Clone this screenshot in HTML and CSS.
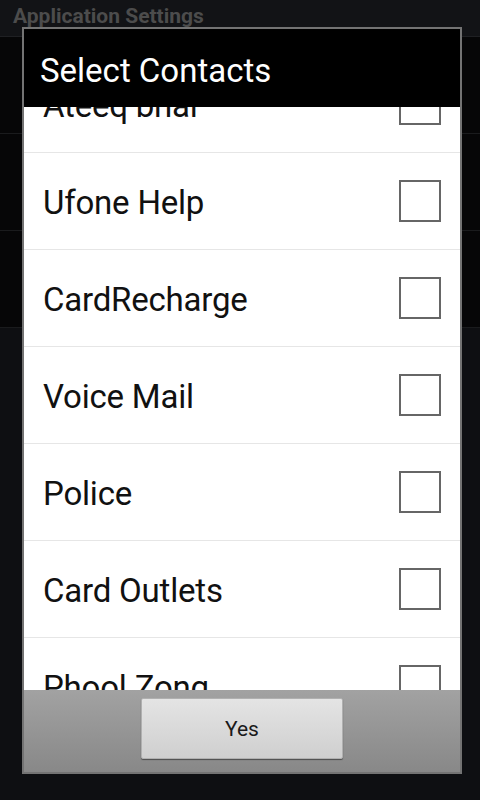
FILE: index.html
```html
<!DOCTYPE html>
<html>
<head>
    <title>Select Contacts</title>
    <link rel="stylesheet" href="styles.css">
</head>
<body>
    <div class="screen">
        <div class="appbar">Application Settings</div>
        <div class="bg-row"></div>
        <div class="bg-row"></div>
        <div class="bg-row"></div>

        <div class="dialog">
            <div class="dialog-title">Select Contacts</div>
            <div class="list">
                <div class="list-inner">
                    <div class="row"><span>Ateeq bhai</span><span class="check"></span></div>
                    <div class="row"><span>Ufone Help</span><span class="check"></span></div>
                    <div class="row"><span>CardRecharge</span><span class="check"></span></div>
                    <div class="row"><span>Voice Mail</span><span class="check"></span></div>
                    <div class="row"><span>Police</span><span class="check"></span></div>
                    <div class="row"><span>Card Outlets</span><span class="check"></span></div>
                    <div class="row"><span>Phool Zong</span><span class="check"></span></div>
                </div>
            </div>
            <div class="buttons">
                <button class="btn">Yes</button>
            </div>
        </div>
    </div>
</body>
</html>
```

FILE: styles.css
```css
body {
    margin: 0;
    background: #0e0f12;
    font-family: Roboto, "Noto Sans", sans-serif;
}
.screen {
    position: relative;
    width: 480px;
    height: 800px;
    overflow: hidden;
}
.appbar {
    height: 37px;
    box-sizing: border-box;
    padding: 4px 0 0 13px;
    background: #121316;
    border-bottom: 1px solid #1f2023;
    color: #4c4c4c;
    font-size: 21px;
    font-weight: bold;
    line-height: 24px;
}
.bg-row {
    height: 97px;
    box-sizing: border-box;
    background: #060607;
    border-bottom: 1px solid #1a1b1d;
}
.dialog {
    position: absolute;
    left: 22px;
    top: 27px;
    width: 440px;
    height: 747px;
    box-sizing: border-box;
    border: 2px solid #737373;
    display: flex;
    flex-direction: column;
}
.dialog-title {
    height: 78px;
    flex: none;
    box-sizing: border-box;
    padding: 22px 0 0 16px;
    background: #000;
    color: #fff;
    font-size: 33px;
    line-height: 40px;
}
.list {
    flex: 1;
    overflow: hidden;
    background: #fff;
}
.list-inner {
    margin-top: -51px;
}
.row {
    height: 96px;
    box-sizing: border-box;
    padding: 3px 19px 0;
    border-bottom: 1px solid #e6e6e6;
    display: flex;
    align-items: center;
    justify-content: space-between;
    color: #111;
    font-size: 33px;
    letter-spacing: -0.2px;
}
.row + .row {
    height: 97px;
}
.row:first-child {
    height: 97px;
}
.check {
    width: 42px;
    height: 42px;
    box-sizing: border-box;
    border: 2px solid #666;
    margin-top: -3px;
}
.buttons {
    height: 82px;
    flex: none;
    box-sizing: border-box;
    padding-top: 8px;
    display: flex;
    justify-content: center;
    align-items: flex-start;
    background: linear-gradient(#a2a2a2, #888);
}
.btn {
    width: 202px;
    height: 61px;
    border: 1px solid #b0b0b0;
    border-radius: 2px;
    background: linear-gradient(#e4e4e4, #cfcfcf);
    box-shadow: 0 1px 1px rgba(0, 0, 0, 0.45);
    color: #1a1a1a;
    font-family: Roboto, "Noto Sans", sans-serif;
    font-size: 21px;
    padding: 0;
}
```
